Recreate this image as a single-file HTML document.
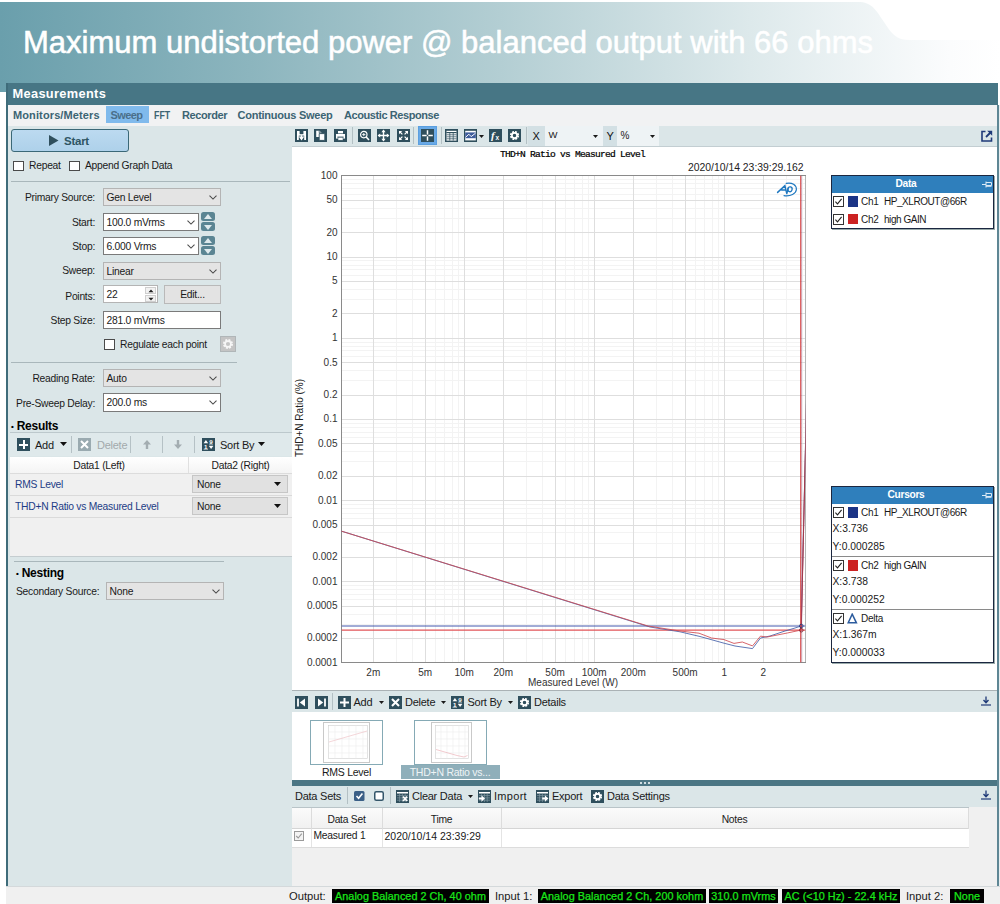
<!DOCTYPE html>
<html>
<head>
<meta charset="utf-8">
<title>Measurements</title>
<style>
*{box-sizing:border-box;margin:0;padding:0}
html,body{width:1000px;height:904px;overflow:hidden;background:#fff}
body{font-family:"Liberation Sans",sans-serif;font-size:10.3px;letter-spacing:-0.25px;color:#1a1a1a;position:relative}
.abs{position:absolute}
.t{position:absolute;white-space:nowrap;line-height:14px;height:14px}
#banner{left:0;top:0;width:1000px;height:92px}
#title{left:23px;top:23px;font-size:31px;letter-spacing:0.07px;-webkit-text-stroke:0.55px #fff;line-height:40px;height:40px;color:#fff;letter-spacing:0px}
#bar{left:6px;top:83px;width:992px;height:22px;background:#477685}
#bar .t{left:6.5px;top:4px;color:#fff;font-weight:bold;font-size:12.8px;letter-spacing:0.33px}
#tabs{left:8px;top:105px;width:989px;height:21px;background:#f1f2f3;z-index:2}
#tabs .t{top:3px;font-weight:bold;font-size:11px;color:#3c6473}
#lborder{left:6px;top:83px;width:2px;height:803px;background:#3f6c7a}
#left{left:8px;top:124px;width:284px;height:762px;background:#dbe6e8}
#right{left:292px;top:124px;width:705px;height:762px;background:#dbe6e8}
#rborder{left:997px;top:105px;width:1.5px;height:781px;background:#5e8694}
#rstrip{left:998.5px;top:105px;width:1.5px;height:799px;background:#e8eef0}
#status{left:6px;top:886px;width:994px;height:18px;background:#f0f0f0;border-top:1px solid #d4d9db}
/* left panel controls */
.lbl{position:absolute;white-space:nowrap;line-height:14px;height:14px;text-align:right}
.combo{position:absolute;height:18px;border:1px solid #b4b4b4;background:#e4e4e4;line-height:16px;padding-left:2.5px;white-space:nowrap}
.combo.w{background:#fff;border-color:#7a7a7a}
.combo svg{position:absolute;right:3.5px;top:6px}
.cb{position:absolute;width:10.5px;height:10.5px;border:1px solid #4a4a4a;background:#fff}
.hr{position:absolute;height:1px;background:#a9b7bb}
.spin{position:absolute;width:14px;height:9px;background:#5b8593;border-radius:2.5px}
.spin:after{content:"";position:absolute;left:2.5px;top:2px;border:4.5px solid transparent}
.spin.up:after{border-bottom:5px solid #dfeaed;border-top:0;top:2px}
.spin.dn:after{border-top:5px solid #dfeaed;border-bottom:0;top:2.5px}
#left .t,#left .lbl{line-height:16px}
#left .combo{line-height:18px}
.ico{position:absolute;width:13px;height:13px;background:#2f4f5d}
.g{position:absolute;background:#0f0;color:#000}
</style>
</head>
<body>
<!-- BANNER -->
<svg id="banner" class="abs" width="1000" height="92" viewBox="0 0 1000 92">
<defs>
<linearGradient id="bg1" x1="0" y1="0" x2="1" y2="0">
<stop offset="0" stop-color="#6a9fac"/>
<stop offset="0.25" stop-color="#8cb5be"/>
<stop offset="0.5" stop-color="#b3ced3"/>
<stop offset="0.75" stop-color="#dde9eb"/>
<stop offset="0.95" stop-color="#fbfcfd"/>
<stop offset="1" stop-color="#ffffff"/>
</linearGradient>
</defs>
<path d="M0,2 L858,2 C872,2 876,10 884,22 C892,34 896,40 910,40 L1000,40 L1000,84 L6,84 L6,92 L0,92 Z" fill="url(#bg1)"/>
</svg>
<div id="title" class="t">Maximum undistorted power @ balanced output with 66 ohms</div>
<div id="bar" class="abs"><div class="t">Measurements</div></div>
<div id="tabs" class="abs">
<div class="abs" style="left:98px;top:1px;width:42.6px;height:17.4px;background:#80baec"></div>
<div class="t" id="tb1" style="letter-spacing:0.115px;left:5px">Monitors/Meters</div>
<div class="t" id="tb2" style="letter-spacing:-0.59px;left:102.5px;color:#4a6f8a">Sweep</div>
<div class="t" id="tb3" style="letter-spacing:0;left:146px;transform:scaleX(0.8);transform-origin:left center">FFT</div>
<div class="t" id="tb4" style="letter-spacing:-0.41px;left:174px">Recorder</div>
<div class="t" id="tb5" style="letter-spacing:-0.25px;left:229.5px">Continuous Sweep</div>
<div class="t" id="tb6" style="letter-spacing:-0.42px;left:336px">Acoustic Response</div>
</div>
<div id="lborder" class="abs"></div>
<div id="left" class="abs">
<!-- coordinates relative to (8,124) -->
<div class="abs" style="left:3px;top:4.5px;width:117.5px;height:23px;border:1.4px solid #3b6877;border-radius:3px;background:linear-gradient(#bcdaf0,#aed1ea)"></div>
<svg class="abs" style="left:41px;top:10.5px" width="9.5" height="11" viewBox="0 0 9.5 11"><path d="M0,0 L9.5,5.5 L0,11 Z" fill="#2f4f5d"/></svg>
<div class="t" style="left:56px;top:9px;font-weight:bold;font-size:11.5px;color:#2f5563">Start</div>
<div class="cb" style="left:5px;top:36.5px"></div><div class="t" style="left:21px;top:34px">Repeat</div>
<div class="cb" style="left:61px;top:36.5px"></div><div class="t" style="left:77px;top:34px">Append Graph Data</div>
<div class="hr" style="left:3px;top:57px;width:279px"></div>

<div class="lbl" style="left:0;width:87px;top:66px">Primary Source:</div>
<div class="combo" style="left:95px;top:64px;width:118px">Gen Level<svg width="8" height="5" viewBox="0 0 8 5"><path d="M0.5,0.6 L4,4.1 L7.5,0.6" fill="none" stroke="#4a4a4a" stroke-width="1.05"/></svg></div>
<div class="lbl" style="left:0;width:87px;top:91px">Start:</div>
<div class="combo w" style="left:95px;top:89px;width:96px">100.0 mVrms<svg width="8" height="5" viewBox="0 0 8 5"><path d="M0.5,0.6 L4,4.1 L7.5,0.6" fill="none" stroke="#4a4a4a" stroke-width="1.05"/></svg></div>
<div class="spin up" style="left:193px;top:88px"></div><div class="spin dn" style="left:193px;top:98px"></div>
<div class="lbl" style="left:0;width:87px;top:115px">Stop:</div>
<div class="combo w" style="left:95px;top:113px;width:96px">6.000 Vrms<svg width="8" height="5" viewBox="0 0 8 5"><path d="M0.5,0.6 L4,4.1 L7.5,0.6" fill="none" stroke="#4a4a4a" stroke-width="1.05"/></svg></div>
<div class="spin up" style="left:193px;top:112px"></div><div class="spin dn" style="left:193px;top:122px"></div>
<div class="lbl" style="left:0;width:87px;top:139px">Sweep:</div>
<div class="combo" style="left:95px;top:138px;width:118px">Linear<svg width="8" height="5" viewBox="0 0 8 5"><path d="M0.5,0.6 L4,4.1 L7.5,0.6" fill="none" stroke="#4a4a4a" stroke-width="1.05"/></svg></div>
<div class="lbl" style="left:0;width:87px;top:165px">Points:</div>
<div class="combo w" style="left:95px;top:161px;width:55px;border-color:#b4b4b4">22</div>
<div class="abs" style="left:137px;top:162.5px;width:11px;height:7.5px;background:#f2f2f2;border:1px solid #cfcfcf"></div><div class="abs" style="left:137px;top:170.5px;width:11px;height:7.5px;background:#f2f2f2;border:1px solid #cfcfcf"></div>
<svg class="abs" style="left:139.5px;top:164.5px" width="6" height="12" viewBox="0 0 6 12"><path d="M0.5,3.2 L3,0.6 L5.5,3.2 Z M0.5,8.8 L3,11.4 L5.5,8.8 Z" fill="#222"/></svg>
<div class="abs" style="left:156px;top:161px;width:57px;height:19px;border:1px solid #b9b9b9;background:#e3e3e3;text-align:center;line-height:17px">Edit...</div>
<div class="lbl" style="left:0;width:87px;top:189px">Step Size:</div>
<div class="combo w" style="left:95px;top:187px;width:118px">281.0 mVrms</div>
<div class="cb" style="left:96px;top:215px"></div><div class="t" style="left:112px;top:213px">Regulate each point</div>
<div class="abs" style="left:212px;top:212px;width:16px;height:16px;background:#c4c4c4;border:1px solid #b0b6b8"></div>
<svg class="abs" style="left:214px;top:214px" width="12" height="12" viewBox="0 0 12 12"><circle cx="6" cy="6" r="3.9" fill="none" stroke="#f6f6f6" stroke-width="2.2" stroke-dasharray="1.9 1.16"/><circle cx="6" cy="6" r="2.9" fill="none" stroke="#f6f6f6" stroke-width="1.6"/></svg>
<div class="hr" style="left:3px;top:238px;width:226px"></div>

<div class="lbl" style="left:0;width:87px;top:247px">Reading Rate:</div>
<div class="combo" style="left:95px;top:245px;width:118px">Auto<svg width="8" height="5" viewBox="0 0 8 5"><path d="M0.5,0.6 L4,4.1 L7.5,0.6" fill="none" stroke="#4a4a4a" stroke-width="1.05"/></svg></div>
<div class="lbl" style="left:0;width:87px;top:272px">Pre-Sweep Delay:</div>
<div class="combo w" style="left:95px;top:269px;width:118px;height:19px">200.0 ms<svg width="8" height="5" viewBox="0 0 8 5"><path d="M0.5,0.6 L4,4.1 L7.5,0.6" fill="none" stroke="#4a4a4a" stroke-width="1.05"/></svg></div>
<div class="t" style="left:3px;top:294px;font-weight:bold;font-size:12px;color:#000"><span style="font-size:8px;vertical-align:1px">&#8226;</span> Results</div>

<!-- results toolbar -->
<div class="abs" style="left:2px;top:308px;width:282px;height:24px;background:#dfe9eb;border-top:1px solid #bcc8cc"></div>
<div class="ico" style="left:9px;top:314px"></div>
<div class="abs" style="left:14.5px;top:316px;width:2px;height:9px;background:#fff"></div><div class="abs" style="left:11px;top:319.5px;width:9px;height:2px;background:#fff"></div>
<div class="t" style="left:27px;top:312.5px;font-size:11px">Add</div>
<svg class="abs" style="left:52px;top:318px" width="7" height="4"><path d="M0,0 L7,0 L3.5,4 Z" fill="#111"/></svg>
<div class="abs" style="left:63px;top:312px;width:1px;height:17px;background:#b5c1c5"></div>
<div class="ico" style="left:70px;top:314px;background:#9aaab0"></div>
<svg class="abs" style="left:70px;top:314px" width="13" height="13"><path d="M3,3 L10,10 M10,3 L3,10" stroke="#fff" stroke-width="2"/></svg>
<div class="t" style="left:89px;top:312.5px;font-size:11px;color:#a3a9ab">Delete</div>
<div class="abs" style="left:122px;top:312px;width:1px;height:17px;background:#b5c1c5"></div>
<svg class="abs" style="left:135px;top:316px" width="8" height="9" viewBox="0 0 8 9"><path d="M4,0 L8,4.5 L5.2,4.5 L5.2,9 L2.8,9 L2.8,4.5 L0,4.5 Z" fill="#a3adb1"/></svg>
<div class="abs" style="left:154px;top:312px;width:1px;height:17px;background:#b5c1c5"></div>
<svg class="abs" style="left:166px;top:316px" width="8" height="9" viewBox="0 0 8 9"><path d="M4,9 L8,4.5 L5.2,4.5 L5.2,0 L2.8,0 L2.8,4.5 L0,4.5 Z" fill="#a3adb1"/></svg>
<div class="abs" style="left:186px;top:312px;width:1px;height:17px;background:#b5c1c5"></div>
<div class="ico" style="left:194px;top:314px"></div>
<svg class="abs" style="left:194px;top:314px" width="13" height="13" viewBox="0 0 13 13"><path d="M1.6,5.2 L3.9,2 L6.2,5.2 Z" fill="#fff"/><path d="M6.9,8 L11.3,8 L9.1,11 Z" fill="#fff"/><text x="2.1" y="10.6" font-family="Liberation Sans, sans-serif" font-size="6.2" font-weight="bold" fill="#fff" letter-spacing="0">1</text><text x="7.2" y="6.2" font-family="Liberation Sans, sans-serif" font-size="6.2" font-weight="bold" fill="#fff" letter-spacing="0">9</text><path d="M1.6,11.3 H6 M7,6.9 H11" stroke="#fff" stroke-width="0.6"/></svg>
<div class="t" style="left:212px;top:312.5px;font-size:11px">Sort By</div>
<svg class="abs" style="left:250px;top:318px" width="7" height="4"><path d="M0,0 L7,0 L3.5,4 Z" fill="#111"/></svg>

<!-- table -->
<div class="abs" style="left:2px;top:333px;width:282px;height:100px;background:#f0f0f0"></div>
<div class="abs" style="left:2px;top:333px;width:282px;height:17px;background:linear-gradient(#ffffff,#f4f4f4);border-bottom:1px solid #dcdcdc"></div>
<div class="abs" style="left:180px;top:333px;width:1px;height:16px;background:#e0e0e0"></div>
<div class="t" style="left:2px;width:178px;text-align:center;top:334px">Data1 (Left)</div>
<div class="t" style="left:181px;width:103px;text-align:center;top:334px">Data2 (Right)</div>
<div class="t" style="left:7px;top:353px;color:#1c3c86">RMS Level</div>
<div class="abs" style="left:184px;top:351px;width:96px;height:18px;background:#e1e1e1;border:1px solid #c6c6c6;line-height:17.5px;padding-left:4px">None<svg width="7" height="4" viewBox="0 0 7 4" style="position:absolute;right:6px;top:6px"><path d="M0,0 L7,0 L3.5,4 Z" fill="#111"/></svg></div>
<div class="abs" style="left:2px;top:371px;width:282px;height:1px;background:#dadada"></div>
<div class="t" style="left:7px;top:375px;color:#1c3c86">THD+N Ratio vs Measured Level</div>
<div class="abs" style="left:184px;top:373px;width:96px;height:18px;background:#e1e1e1;border:1px solid #c6c6c6;line-height:17.5px;padding-left:4px">None<svg width="7" height="4" viewBox="0 0 7 4" style="position:absolute;right:6px;top:6px"><path d="M0,0 L7,0 L3.5,4 Z" fill="#111"/></svg></div>
<div class="abs" style="left:2px;top:393px;width:282px;height:1px;background:#dadada"></div>
<div class="abs" style="left:2px;top:432px;width:282px;height:1px;background:#c5cdd0"></div>

<div class="hr" style="left:6px;top:437px;width:210px"></div>
<div class="t" style="left:8px;top:441px;font-weight:bold;font-size:12px;color:#000"><span style="font-size:8px;vertical-align:1px">&#8226;</span> Nesting</div>
<div class="t" style="left:8px;top:460px">Secondary Source:</div>
<div class="combo" style="left:98px;top:458px;width:118px">None<svg width="8" height="5" viewBox="0 0 8 5"><path d="M0.5,0.6 L4,4.1 L7.5,0.6" fill="none" stroke="#4a4a4a" stroke-width="1.05"/></svg></div>
</div>
<!--RIGHT-START-->
<div id="right" class="abs"></div><div id="rborder" class="abs"></div><div id="rstrip" class="abs"></div>
<svg class="abs" style="left:294.5px;top:129px" width="13" height="13" viewBox="0 0 13 13"><rect width="13" height="13" fill="#2f4f5d"/><path d="M2,2 H11 V11 H2 Z" fill="#fff"/><rect x="4.6" y="2" width="3.8" height="3.2" fill="#2f4f5d"/><rect x="3.8" y="6.6" width="5.4" height="4.4" fill="#2f4f5d"/><path d="M6.5,6.2 V9 M4.9,8.2 L6.5,10.4 L8.1,8.2 Z" stroke="#fff" stroke-width="1.2" fill="#fff"/></svg>
<svg class="abs" style="left:314px;top:129px" width="13" height="13" viewBox="0 0 13 13"><rect width="13" height="13" fill="#2f4f5d"/><path d="M2.2,1.8 H5.5 L7.2,3.5 V8 H2.2 Z" fill="#fff"/><path d="M5.2,4.6 H10.8 V11.4 H5.2 Z" fill="#fff" stroke="#2f4f5d" stroke-width="0.9"/><path d="M5.2,1.6 V3.8 H7.4" stroke="#2f4f5d" stroke-width="0.8" fill="none"/></svg>
<svg class="abs" style="left:334px;top:129px" width="13" height="13" viewBox="0 0 13 13"><rect width="13" height="13" fill="#2f4f5d"/><rect x="4" y="2" width="5" height="2.4" fill="#fff"/><rect x="2" y="5" width="9" height="4.6" fill="#fff"/><rect x="3.4" y="7.6" width="6.2" height="0.9" fill="#2f4f5d"/><rect x="4" y="8.5" width="5" height="2.7" fill="#fff" stroke="#2f4f5d" stroke-width="0.5"/></svg>
<div class="abs" style="left:352px;top:127px;width:1px;height:17px;background:#b3c0c4"></div>
<svg class="abs" style="left:358px;top:129px" width="13" height="13" viewBox="0 0 13 13"><rect width="13" height="13" fill="#2f4f5d"/><circle cx="5.8" cy="5.6" r="3.2" stroke="#fff" fill="none" stroke-width="1.2"/><path d="M8.2,8 L11,11" stroke="#fff" stroke-width="1.6"/><path d="M4.2,5.6 H7.4 M5.8,4 V7.2" stroke="#fff" stroke-width="0.9"/></svg>
<svg class="abs" style="left:377px;top:129px" width="13" height="13" viewBox="0 0 13 13"><rect width="13" height="13" fill="#2f4f5d"/><path d="M6.5,1.5 V11.5 M1.5,6.5 H11.5" stroke="#fff" stroke-width="1.4"/><path d="M6.5,0.6 L8.6,3.2 H4.4 Z M6.5,12.4 L8.6,9.8 H4.4 Z M0.6,6.5 L3.2,4.4 V8.6 Z M12.4,6.5 L9.8,4.4 V8.6 Z" fill="#fff"/></svg>
<svg class="abs" style="left:396.5px;top:129px" width="13" height="13" viewBox="0 0 13 13"><rect width="13" height="13" fill="#2f4f5d"/><path d="M2,2 L5.2,2 L2,5.2 Z M11,2 L7.8,2 L11,5.2 Z M2,11 L5.2,11 L2,7.8 Z M11,11 L7.8,11 L11,7.8 Z" fill="#fff"/><path d="M3,3 L5.4,5.4 M10,3 L7.6,5.4 M3,10 L5.4,7.6 M10,10 L7.6,7.6" stroke="#fff" stroke-width="1.2"/></svg>
<div class="abs" style="left:413px;top:127px;width:1px;height:17px;background:#b3c0c4"></div>
<div class="abs" style="left:418px;top:126px;width:19px;height:19px;background:#69a9e6;border:1px solid #5b9fe0"></div>
<svg class="abs" style="left:421px;top:129px" width="13" height="13" viewBox="0 0 13 13"><rect width="13" height="13" fill="#2f4f5d"/><path d="M6.5,1.2 V5 M6.5,8 V11.8 M1.2,6.5 H5 M8,6.5 H11.8" stroke="#fff" stroke-width="1.5"/><circle cx="6.5" cy="6.5" r="1" fill="none" stroke="#fff" stroke-width="0.7"/></svg>
<div class="abs" style="left:441px;top:127px;width:1px;height:17px;background:#b3c0c4"></div>
<svg class="abs" style="left:445px;top:129px" width="13" height="13" viewBox="0 0 13 13"><rect width="13" height="13" fill="#2f4f5d"/><rect x="1.5" y="1.8" width="10" height="9.8" fill="#fff"/><path d="M1.5,3.6 H11.5 M1.5,5.8 H11.5 M1.5,7.8 H11.5 M1.5,9.8 H11.5 M4.8,3.6 V11.6 M8.2,3.6 V11.6" stroke="#2f4f5d" stroke-width="0.75"/><rect x="1.5" y="3" width="10" height="1.1" fill="#2f4f5d"/></svg>
<svg class="abs" style="left:464px;top:129px" width="13" height="13" viewBox="0 0 13 13"><rect width="13" height="13" fill="#2f4f5d"/><rect x="1.2" y="1.8" width="10.6" height="9.6" fill="#fff"/><rect x="1.2" y="3.4" width="10.6" height="5.8" fill="#3f5d9c"/><path d="M1.5,8.4 L4.8,5.2 L7.2,7.6 L11.5,4.2" stroke="#fff" stroke-width="1" fill="none"/></svg>
<svg class="abs" style="left:479px;top:134.5px" width="5" height="3" viewBox="0 0 5 3"><path d="M0,0 L5,0 L2.5,3 Z" fill="#1a1a1a"/></svg>
<svg class="abs" style="left:489px;top:129px" width="13" height="13" viewBox="0 0 13 13"><rect width="13" height="13" fill="#2f4f5d"/><text x="2" y="10" font-family="Liberation Serif, serif" font-style="italic" font-size="11" font-weight="bold" fill="#fff">f</text><text x="6.6" y="11" font-family="Liberation Sans, sans-serif" font-size="6.5" fill="#fff" font-weight="bold">x</text></svg>
<svg class="abs" style="left:508px;top:129px" width="13" height="13" viewBox="0 0 13 13"><rect width="13" height="13" fill="#2f4f5d"/><circle cx="6.5" cy="6.5" r="3.3" stroke="#fff" stroke-width="2.6" fill="none" stroke-dasharray="1.7 0.9"/><circle cx="6.5" cy="6.5" r="2.6" stroke="#fff" stroke-width="1.6" fill="none"/></svg>
<div class="abs" style="left:526px;top:127px;width:1px;height:17px;background:#b3c0c4"></div>
<div class="abs" style="left:528px;top:126px;width:17px;height:20px;background:#d3e0e4"></div>
<div class="t" style="left:532.5px;top:128.5px;font-size:11px;color:#111">X</div>
<div class="abs" style="left:545px;top:126px;width:58px;height:20px;background:#eef3f5"></div>
<div class="t" style="left:548.5px;top:127.5px;font-size:9.5px">W</div>
<svg class="abs" style="left:593px;top:135px" width="5" height="3" viewBox="0 0 5 3"><path d="M0,0 L5,0 L2.5,3 Z" fill="#1a1a1a"/></svg>
<div class="abs" style="left:603px;top:126px;width:14px;height:20px;background:#d3e0e4"></div>
<div class="t" style="left:606.5px;top:128.5px;font-size:11px;color:#111">Y</div>
<div class="abs" style="left:617px;top:126px;width:42px;height:20px;background:#eef3f5"></div>
<div class="t" style="left:620.5px;top:128.5px;font-size:10px">%</div>
<svg class="abs" style="left:650px;top:135px" width="5" height="3" viewBox="0 0 5 3"><path d="M0,0 L5,0 L2.5,3 Z" fill="#1a1a1a"/></svg>
<svg class="abs" style="left:981px;top:130px" width="12" height="12" viewBox="0 0 12 12"><path d="M4.5,1.5 H1 V11 H10.5 V7.5" stroke="#1f3a78" stroke-width="1.6" fill="none"/><path d="M5,7 L10,2" stroke="#1f3a78" stroke-width="1.8"/><path d="M6.2,0.8 H11.2 V5.8 Z" fill="#1f3a78"/></svg>
<div class="abs" style="left:292px;top:146px;width:705px;height:1px;background:#c3ced2"></div>
<svg class="abs" style="left:292px;top:147px" width="705" height="543" viewBox="0 0 705 543" font-family="Liberation Sans, sans-serif" letter-spacing="0">
<rect x="0" y="0" width="705" height="543" fill="#fff"/>
<g stroke="#f3f3f3" stroke-width="1" shape-rendering="crispEdges">
<line x1="104.5" y1="28.5" x2="104.5" y2="515.5"/>
<line x1="120.5" y1="28.5" x2="120.5" y2="515.5"/>
<line x1="143.5" y1="28.5" x2="143.5" y2="515.5"/>
<line x1="152.5" y1="28.5" x2="152.5" y2="515.5"/>
<line x1="160.5" y1="28.5" x2="160.5" y2="515.5"/>
<line x1="166.5" y1="28.5" x2="166.5" y2="515.5"/>
<line x1="234.5" y1="28.5" x2="234.5" y2="515.5"/>
<line x1="250.5" y1="28.5" x2="250.5" y2="515.5"/>
<line x1="273.5" y1="28.5" x2="273.5" y2="515.5"/>
<line x1="282.5" y1="28.5" x2="282.5" y2="515.5"/>
<line x1="290.5" y1="28.5" x2="290.5" y2="515.5"/>
<line x1="296.5" y1="28.5" x2="296.5" y2="515.5"/>
<line x1="364.5" y1="28.5" x2="364.5" y2="515.5"/>
<line x1="380.5" y1="28.5" x2="380.5" y2="515.5"/>
<line x1="403.5" y1="28.5" x2="403.5" y2="515.5"/>
<line x1="412.5" y1="28.5" x2="412.5" y2="515.5"/>
<line x1="420.5" y1="28.5" x2="420.5" y2="515.5"/>
<line x1="426.5" y1="28.5" x2="426.5" y2="515.5"/>
<line x1="494.5" y1="28.5" x2="494.5" y2="515.5"/>
<line x1="510.5" y1="28.5" x2="510.5" y2="515.5"/>
<line x1="49.5" y1="477.5" x2="513.5" y2="477.5"/>
<line x1="49.5" y1="467.5" x2="513.5" y2="467.5"/>
<line x1="49.5" y1="452.5" x2="513.5" y2="452.5"/>
<line x1="49.5" y1="447.5" x2="513.5" y2="447.5"/>
<line x1="49.5" y1="442.5" x2="513.5" y2="442.5"/>
<line x1="49.5" y1="438.5" x2="513.5" y2="438.5"/>
<line x1="49.5" y1="396.5" x2="513.5" y2="396.5"/>
<line x1="49.5" y1="385.5" x2="513.5" y2="385.5"/>
<line x1="49.5" y1="371.5" x2="513.5" y2="371.5"/>
<line x1="49.5" y1="366.5" x2="513.5" y2="366.5"/>
<line x1="49.5" y1="361.5" x2="513.5" y2="361.5"/>
<line x1="49.5" y1="357.5" x2="513.5" y2="357.5"/>
<line x1="49.5" y1="314.5" x2="513.5" y2="314.5"/>
<line x1="49.5" y1="304.5" x2="513.5" y2="304.5"/>
<line x1="49.5" y1="290.5" x2="513.5" y2="290.5"/>
<line x1="49.5" y1="285.5" x2="513.5" y2="285.5"/>
<line x1="49.5" y1="280.5" x2="513.5" y2="280.5"/>
<line x1="49.5" y1="276.5" x2="513.5" y2="276.5"/>
<line x1="49.5" y1="233.5" x2="513.5" y2="233.5"/>
<line x1="49.5" y1="223.5" x2="513.5" y2="223.5"/>
<line x1="49.5" y1="209.5" x2="513.5" y2="209.5"/>
<line x1="49.5" y1="203.5" x2="513.5" y2="203.5"/>
<line x1="49.5" y1="199.5" x2="513.5" y2="199.5"/>
<line x1="49.5" y1="195.5" x2="513.5" y2="195.5"/>
<line x1="49.5" y1="152.5" x2="513.5" y2="152.5"/>
<line x1="49.5" y1="142.5" x2="513.5" y2="142.5"/>
<line x1="49.5" y1="128.5" x2="513.5" y2="128.5"/>
<line x1="49.5" y1="122.5" x2="513.5" y2="122.5"/>
<line x1="49.5" y1="118.5" x2="513.5" y2="118.5"/>
<line x1="49.5" y1="113.5" x2="513.5" y2="113.5"/>
<line x1="49.5" y1="71.5" x2="513.5" y2="71.5"/>
<line x1="49.5" y1="61.5" x2="513.5" y2="61.5"/>
<line x1="49.5" y1="47.5" x2="513.5" y2="47.5"/>
<line x1="49.5" y1="41.5" x2="513.5" y2="41.5"/>
<line x1="49.5" y1="36.5" x2="513.5" y2="36.5"/>
<line x1="49.5" y1="32.5" x2="513.5" y2="32.5"/>
</g>
<g stroke="#dedede" stroke-width="1" shape-rendering="crispEdges">
<line x1="81.5" y1="28.5" x2="81.5" y2="515.5"/>
<line x1="133.5" y1="28.5" x2="133.5" y2="515.5"/>
<line x1="172.5" y1="28.5" x2="172.5" y2="515.5"/>
<line x1="211.5" y1="28.5" x2="211.5" y2="515.5"/>
<line x1="263.5" y1="28.5" x2="263.5" y2="515.5"/>
<line x1="302.5" y1="28.5" x2="302.5" y2="515.5"/>
<line x1="341.5" y1="28.5" x2="341.5" y2="515.5"/>
<line x1="393.5" y1="28.5" x2="393.5" y2="515.5"/>
<line x1="432.5" y1="28.5" x2="432.5" y2="515.5"/>
<line x1="471.5" y1="28.5" x2="471.5" y2="515.5"/>
<line x1="49.5" y1="491.5" x2="513.5" y2="491.5"/>
<line x1="49.5" y1="459.5" x2="513.5" y2="459.5"/>
<line x1="49.5" y1="434.5" x2="513.5" y2="434.5"/>
<line x1="49.5" y1="410.5" x2="513.5" y2="410.5"/>
<line x1="49.5" y1="378.5" x2="513.5" y2="378.5"/>
<line x1="49.5" y1="353.5" x2="513.5" y2="353.5"/>
<line x1="49.5" y1="329.5" x2="513.5" y2="329.5"/>
<line x1="49.5" y1="296.5" x2="513.5" y2="296.5"/>
<line x1="49.5" y1="272.5" x2="513.5" y2="272.5"/>
<line x1="49.5" y1="248.5" x2="513.5" y2="248.5"/>
<line x1="49.5" y1="215.5" x2="513.5" y2="215.5"/>
<line x1="49.5" y1="191.5" x2="513.5" y2="191.5"/>
<line x1="49.5" y1="166.5" x2="513.5" y2="166.5"/>
<line x1="49.5" y1="134.5" x2="513.5" y2="134.5"/>
<line x1="49.5" y1="110.5" x2="513.5" y2="110.5"/>
<line x1="49.5" y1="85.5" x2="513.5" y2="85.5"/>
<line x1="49.5" y1="53.5" x2="513.5" y2="53.5"/>
</g>
<path d="M513.5,28.5 V515.5" fill="none" stroke="#b4b4b4" stroke-width="1" shape-rendering="crispEdges"/><path d="M513.5,28.5 H49.5 V515.5 H513.5" fill="none" stroke="#8a8a8a" stroke-width="1" shape-rendering="crispEdges"/>
<g font-size="10" fill="#333" text-anchor="end">
<text x="45.5" y="31.8">100</text>
<text x="45.5" y="56.2">50</text>
<text x="45.5" y="88.5">20</text>
<text x="45.5" y="113.0">10</text>
<text x="45.5" y="137.4">5</text>
<text x="45.5" y="169.7">2</text>
<text x="45.5" y="194.1">1</text>
<text x="45.5" y="218.6">0.5</text>
<text x="45.5" y="250.9">0.2</text>
<text x="45.5" y="275.3">0.1</text>
<text x="45.5" y="299.7">0.05</text>
<text x="45.5" y="332.0">0.02</text>
<text x="45.5" y="356.5">0.01</text>
<text x="45.5" y="380.9">0.005</text>
<text x="45.5" y="413.2">0.002</text>
<text x="45.5" y="437.6">0.001</text>
<text x="45.5" y="462.1">0.0005</text>
<text x="45.5" y="494.4">0.0002</text>
<text x="45.5" y="518.8">0.0001</text>
</g>
<g font-size="10" fill="#333" text-anchor="middle">
<text x="81.3" y="528.7">2m</text>
<text x="133.1" y="528.7">5m</text>
<text x="172.2" y="528.7">10m</text>
<text x="211.3" y="528.7">20m</text>
<text x="263.1" y="528.7">50m</text>
<text x="302.2" y="528.7">100m</text>
<text x="341.3" y="528.7">200m</text>
<text x="393.1" y="528.7">500m</text>
<text x="432.2" y="528.7">1</text>
<text x="471.3" y="528.7">2</text>
<text x="281" y="539.0" font-size="10">Measured Level (W)</text>
</g>
<text transform="translate(11.300000000000011,271) rotate(-90)" font-size="10" fill="#222" text-anchor="middle">THD+N Ratio (%)</text>
<text x="208" y="9.5" font-family="Liberation Mono, monospace" font-size="9.6" letter-spacing="-0.76" fill="#000" stroke="#000" stroke-width="0.22">THD+N Ratio vs Measured Level</text>
<text x="511.5" y="24" font-size="10.4" fill="#222" text-anchor="end">2020/10/14 23:39:29.162</text>
<clipPath id="pc"><rect x="49.5" y="28.5" width="464.0" height="487.0"/></clipPath>
<g clip-path="url(#pc)" fill="none" stroke-linejoin="round">
<line x1="49.5" y1="479" x2="513.5" y2="479" stroke="#4558ad" stroke-width="1"/>
<line x1="49.5" y1="483.20000000000005" x2="513.5" y2="483.20000000000005" stroke="#e25558" stroke-width="1.3"/>
<polyline points="49.0,384.0 358.0,480.0 388.0,484.8 408.0,489.5 432.0,496.2 443.0,499.0 460.5,501.6 468.5,491.0 478.0,489.0 493.0,484.0 503.0,481.0 509.2,479.0 513.5,299.0 518.0,93.0" stroke="#4560a8" stroke-width="0.85"/>
<polyline points="49.0,384.0 356.0,479.0 388.0,484.0 407.0,486.2 419.5,491.0 432.0,492.6 442.0,496.4 450.3,495.0 460.5,498.9 468.5,489.1 474.8,490.1 495.8,485.9 509.2,483.0 513.5,303.0 518.0,93.0" stroke="#d04a50" stroke-width="0.85"/>
<polyline points="509.3,481.0 513.5,299.0 518.0,93.0" stroke="#9a3446" stroke-width="0.8"/>
<line x1="509.6" y1="28.5" x2="509.6" y2="515.5" stroke="#6a5a98" stroke-width="0.3"/>
<line x1="508.75" y1="28.5" x2="508.75" y2="515.5" stroke="#d43838" stroke-width="1.05"/>
<circle cx="509.29999999999995" cy="479" r="1.8" stroke="#1c2f7a" stroke-width="0.8"/>
<circle cx="509.29999999999995" cy="483.20000000000005" r="1.8" stroke="#7a1c2a" stroke-width="0.8"/>
</g>
<g transform="translate(478,23)" fill="none" stroke="#1f78c0" stroke-linecap="round"><path d="M7.6,22.4 L14.9,15.6 L16.6,22.8 M11.6,19.9 H16" stroke-width="1.45"/><path d="M18.3,17.6 L16.8,23.6" stroke-width="1.4"/><ellipse cx="20" cy="19.3" rx="2.1" ry="2.4" stroke-width="1.3" transform="rotate(15 20 19.3)"/><path d="M16.2,13.4 C22,12.2 26.6,15 26.4,19.6 C26.2,23.6 20.5,26.6 14,25.6" stroke-width="1.15"/></g>
</svg>
<div class="abs" style="left:831px;top:175px;width:163px;height:54px;background:#fff;border:1px solid #1b2740;box-shadow:1px 1px 0 #9aa"></div>
<div class="abs" style="left:832px;top:176px;width:161px;height:17px;background:#2f7fbc"></div>
<div class="t" style="left:832px;top:177px;width:148px;text-align:center;color:#fff;font-weight:bold;font-size:10.2px;letter-spacing:-0.3px">Data</div>
<svg class="abs" style="left:982px;top:181px" width="10" height="7" viewBox="0 0 10 7"><path d="M0,3.5 H4 M4,0.5 V6.5 M4,1.5 H9.5 V4.5 H4 M4,5.3 H9.5" stroke="#dbe9f5" stroke-width="1" fill="none"/></svg>
<svg class="abs" style="left:833px;top:196.0px" width="11" height="11" viewBox="0 0 11 11"><rect x="0.5" y="0.5" width="10" height="10" fill="#fff" stroke="#333" stroke-width="1"/><path d="M2.4,5.6 L4.5,7.8 L8.6,2.8" stroke="#222" stroke-width="1.1" fill="none"/></svg>
<div class="abs" style="left:848px;top:196.0px;width:10px;height:10.5px;background:#1b3486"></div>
<div class="t" style="left:861px;top:195.0px;font-size:10px">Ch1</div>
<div class="t" style="left:884px;top:195.0px;font-size:10px;letter-spacing:-0.45px">HP_XLROUT@66R</div>
<svg class="abs" style="left:833px;top:213.5px" width="11" height="11" viewBox="0 0 11 11"><rect x="0.5" y="0.5" width="10" height="10" fill="#fff" stroke="#333" stroke-width="1"/><path d="M2.4,5.6 L4.5,7.8 L8.6,2.8" stroke="#222" stroke-width="1.1" fill="none"/></svg>
<div class="abs" style="left:848px;top:213.5px;width:10px;height:10.5px;background:#cc2222"></div>
<div class="t" style="left:861px;top:212.5px;font-size:10px">Ch2</div>
<div class="t" style="left:884px;top:212.5px;font-size:10px;letter-spacing:-0.45px">high GAIN</div>
<div class="abs" style="left:831px;top:486px;width:163px;height:177px;background:#fff;border:1px solid #1b2740;box-shadow:1px 1px 0 #9aa"></div>
<div class="abs" style="left:832px;top:487px;width:161px;height:17px;background:#2f7fbc"></div>
<div class="t" style="left:832px;top:487.5px;width:148px;text-align:center;color:#fff;font-weight:bold;font-size:10.2px;letter-spacing:-0.3px">Cursors</div>
<svg class="abs" style="left:982px;top:492px" width="10" height="7" viewBox="0 0 10 7"><path d="M0,3.5 H4 M4,0.5 V6.5 M4,1.5 H9.5 V4.5 H4 M4,5.3 H9.5" stroke="#dbe9f5" stroke-width="1" fill="none"/></svg>
<svg class="abs" style="left:833px;top:507px" width="11" height="11" viewBox="0 0 11 11"><rect x="0.5" y="0.5" width="10" height="10" fill="#fff" stroke="#333" stroke-width="1"/><path d="M2.4,5.6 L4.5,7.8 L8.6,2.8" stroke="#222" stroke-width="1.1" fill="none"/></svg>
<div class="abs" style="left:848px;top:507px;width:10px;height:10.5px;background:#1b3486"></div>
<div class="t" style="left:861px;top:506px;font-size:10px">Ch1</div>
<div class="t" style="left:884px;top:506px;font-size:10px;letter-spacing:-0.45px">HP_XLROUT@66R</div>
<div class="t" style="left:832.5px;top:522px;letter-spacing:0">X:3.736</div>
<div class="t" style="left:832.5px;top:539.5px;letter-spacing:0">Y:0.000285</div>
<svg class="abs" style="left:833px;top:560px" width="11" height="11" viewBox="0 0 11 11"><rect x="0.5" y="0.5" width="10" height="10" fill="#fff" stroke="#333" stroke-width="1"/><path d="M2.4,5.6 L4.5,7.8 L8.6,2.8" stroke="#222" stroke-width="1.1" fill="none"/></svg>
<div class="abs" style="left:848px;top:560px;width:10px;height:10.5px;background:#cc2222"></div>
<div class="t" style="left:861px;top:559px;font-size:10px">Ch2</div>
<div class="t" style="left:884px;top:559px;font-size:10px;letter-spacing:-0.45px">high GAIN</div>
<div class="t" style="left:832.5px;top:575px;letter-spacing:0">X:3.738</div>
<div class="t" style="left:832.5px;top:592.5px;letter-spacing:0">Y:0.000252</div>
<svg class="abs" style="left:833px;top:613px" width="11" height="11" viewBox="0 0 11 11"><rect x="0.5" y="0.5" width="10" height="10" fill="#fff" stroke="#333" stroke-width="1"/><path d="M2.4,5.6 L4.5,7.8 L8.6,2.8" stroke="#222" stroke-width="1.1" fill="none"/></svg>
<svg class="abs" style="left:847px;top:613px" width="11" height="11" viewBox="0 0 11 11"><path d="M5.2,1.2 L9.4,9.8 H1.2 Z" fill="none" stroke="#2c5c9e" stroke-width="1.5"/></svg>
<div class="t" style="left:861px;top:612px;font-size:10px">Delta</div>
<div class="t" style="left:832.5px;top:628px;letter-spacing:0">X:1.367m</div>
<div class="t" style="left:832.5px;top:645.5px;letter-spacing:0">Y:0.000033</div>
<div class="abs" style="left:832px;top:556px;width:161px;height:1px;background:#8a8a8a"></div>
<div class="abs" style="left:832px;top:609px;width:161px;height:1px;background:#8a8a8a"></div>
<div class="abs" style="left:292px;top:690px;width:705px;height:1px;background:#aab2b5"></div>
<svg class="abs" style="left:295px;top:695.5px" width="13" height="13" viewBox="0 0 13 13"><rect width="13" height="13" fill="#2f4f5d"/><path d="M3,2.5 V10.5" stroke="#fff" stroke-width="1.8"/><path d="M10,2.5 V10.5 L4.8,6.5 Z" fill="#fff"/></svg>
<svg class="abs" style="left:314.5px;top:695.5px" width="13" height="13" viewBox="0 0 13 13"><rect width="13" height="13" fill="#2f4f5d"/><path d="M10,2.5 V10.5" stroke="#fff" stroke-width="1.8"/><path d="M3,2.5 V10.5 L8.2,6.5 Z" fill="#fff"/></svg>
<div class="abs" style="left:332px;top:693px;width:1px;height:17px;background:#b3c0c4"></div>
<svg class="abs" style="left:337.5px;top:695.5px" width="13" height="13" viewBox="0 0 13 13"><rect width="13" height="13" fill="#2f4f5d"/><path d="M6.5,2 V11 M2,6.5 H11" stroke="#fff" stroke-width="2"/></svg>
<div class="t" style="left:353.5px;top:695px;font-size:11px">Add</div>
<svg class="abs" style="left:379px;top:701px" width="5" height="3" viewBox="0 0 5 3"><path d="M0,0 L5,0 L2.5,3 Z" fill="#1a1a1a"/></svg>
<svg class="abs" style="left:388.5px;top:695.5px" width="13" height="13" viewBox="0 0 13 13"><rect width="13" height="13" fill="#2f4f5d"/><path d="M3,3 L10,10 M10,3 L3,10" stroke="#fff" stroke-width="2.1"/></svg>
<div class="t" style="left:405px;top:695px;font-size:11px">Delete</div>
<svg class="abs" style="left:441px;top:701px" width="5" height="3" viewBox="0 0 5 3"><path d="M0,0 L5,0 L2.5,3 Z" fill="#1a1a1a"/></svg>
<svg class="abs" style="left:451px;top:695.5px" width="13" height="13" viewBox="0 0 13 13"><rect width="13" height="13" fill="#2f4f5d"/><path d="M1.6,5.2 L3.9,2 L6.2,5.2 Z" fill="#fff"/><path d="M6.9,8 L11.3,8 L9.1,11 Z" fill="#fff"/><text x="2.1" y="10.6" font-family="Liberation Sans, sans-serif" font-size="6.2" font-weight="bold" fill="#fff" letter-spacing="0">1</text><text x="7.2" y="6.2" font-family="Liberation Sans, sans-serif" font-size="6.2" font-weight="bold" fill="#fff" letter-spacing="0">9</text><path d="M1.6,11.3 H6 M7,6.9 H11" stroke="#fff" stroke-width="0.6"/></svg>
<div class="t" style="left:467.5px;top:695px;font-size:11px">Sort By</div>
<svg class="abs" style="left:508px;top:701px" width="5" height="3" viewBox="0 0 5 3"><path d="M0,0 L5,0 L2.5,3 Z" fill="#1a1a1a"/></svg>
<svg class="abs" style="left:517.5px;top:695.5px" width="13" height="13" viewBox="0 0 13 13"><rect width="13" height="13" fill="#2f4f5d"/><circle cx="6.5" cy="6.5" r="3.3" stroke="#fff" stroke-width="2.6" fill="none" stroke-dasharray="1.7 0.9"/><circle cx="6.5" cy="6.5" r="2.6" stroke="#fff" stroke-width="1.6" fill="none"/></svg>
<div class="t" style="left:534px;top:695px;font-size:11px">Details</div>
<svg class="abs" style="left:981px;top:696px" width="10" height="10" viewBox="0 0 10 10"><path d="M5,0.5 V6 M2.5,4 L5,6.8 L7.5,4" stroke="#1f3a78" stroke-width="1.3" fill="none"/><path d="M0,9 H10" stroke="#1f3a78" stroke-width="1.2"/></svg>
<div class="abs" style="left:292px;top:712px;width:705px;height:68px;background:#fff"></div>
<div class="abs" style="left:310px;top:720px;width:73px;height:45px;border:1px solid #85aab5;background:#fff"></div>
<svg class="abs" style="left:323px;top:722px" width="47" height="41" viewBox="0 0 47 41"><rect x="0.5" y="0.5" width="46" height="40" fill="#fff" stroke="#c9c9c9"/><rect x="5.5" y="3.5" width="39" height="33" fill="none" stroke="#cfcfcf" stroke-width="0.6"/><path d="M12,3.5 V36.5 M19,3.5 V36.5 M26,3.5 V36.5 M33,3.5 V36.5 M40,3.5 V36.5 M5.5,10 H44.5 M5.5,17 H44.5 M5.5,24 H44.5 M5.5,31 H44.5" stroke="#ececec" stroke-width="0.6"/><path d="M6,20 L44,9" stroke="#efc4c8" stroke-width="0.7" fill="none"/></svg>
<div class="t" style="left:310px;top:764.5px;width:73px;text-align:center;font-size:10.5px">RMS Level</div>
<div class="abs" style="left:414px;top:720px;width:73px;height:45px;border:1px solid #85aab5;background:#fff"></div>
<svg class="abs" style="left:431px;top:722px" width="41" height="41" viewBox="0 0 41 41"><rect x="0.5" y="0.5" width="40" height="40" fill="#fff" stroke="#c9c9c9"/><rect x="4.5" y="3.5" width="33" height="33" fill="none" stroke="#cfcfcf" stroke-width="0.6"/><path d="M10,3.5 V36.5 M16,3.5 V36.5 M22,3.5 V36.5 M28,3.5 V36.5 M34,3.5 V36.5 M4.5,10 H37.5 M4.5,17 H37.5 M4.5,24 H37.5 M4.5,31 H37.5" stroke="#ececec" stroke-width="0.6"/><path d="M5,27.5 L26,33.5 L33,35 L36.5,33.5" stroke="#ecb4ba" stroke-width="0.7" fill="none"/></svg>
<div class="abs" style="left:400.5px;top:764.5px;width:99.5px;height:14px;background:#8fafba"></div>
<div class="t" style="left:400px;top:765px;width:100px;text-align:center;color:#eef4f6;font-size:10.5px">THD+N Ratio vs...</div>
<div class="abs" style="left:292px;top:780px;width:705px;height:6px;background:#4b7684"></div>
<div class="abs" style="left:640px;top:782px;width:2px;height:2px;background:#cfdde1;box-shadow:4px 0 0 #cfdde1,8px 0 0 #cfdde1"></div>
<div class="t" style="left:295px;top:789px;font-size:11px">Data Sets</div>
<div class="abs" style="left:347px;top:787px;width:1px;height:17px;background:#b3c0c4"></div>
<svg class="abs" style="left:354px;top:791px" width="11" height="10" viewBox="0 0 11 10"><rect x="0" y="0" width="10.5" height="10" rx="1.5" fill="#3a5f86"/><path d="M2.5,5 L4.6,7.2 L8.4,2.6" stroke="#fff" stroke-width="1.6" fill="none"/></svg>
<svg class="abs" style="left:374px;top:791px" width="10" height="10" viewBox="0 0 10 10"><rect x="0.75" y="0.75" width="8.5" height="8.5" rx="1.5" fill="#fff" stroke="#34566a" stroke-width="1.5"/></svg>
<div class="abs" style="left:390px;top:787px;width:1px;height:17px;background:#b3c0c4"></div>
<svg class="abs" style="left:395.8px;top:789.5px" width="13" height="13" viewBox="0 0 13 13"><rect width="13" height="13" fill="#2f4f5d"/><rect x="1" y="2" width="11" height="1.5" fill="#fff"/><path d="M1,5.6 H12 M1,7.9 H12 M1,10.2 H12 M3.6,4 V12 M6.4,4 V12 M9.2,4 V12" stroke="#8399a4" stroke-width="0.7"/><path d="M7,6.6 L11.2,11 M11.2,6.6 L7,11" stroke="#fff" stroke-width="1.7"/></svg>
<div class="t" style="left:412px;top:789px;font-size:11px">Clear Data</div>
<svg class="abs" style="left:468px;top:795px" width="5" height="3" viewBox="0 0 5 3"><path d="M0,0 L5,0 L2.5,3 Z" fill="#1a1a1a"/></svg>
<svg class="abs" style="left:478px;top:789.5px" width="13" height="13" viewBox="0 0 13 13"><rect width="13" height="13" fill="#2f4f5d"/><rect x="1" y="2" width="11" height="1.5" fill="#fff"/><path d="M1,5.6 H12 M1,7.9 H12 M1,10.2 H12 M3.6,4 V12 M6.4,4 V12 M9.2,4 V12" stroke="#8399a4" stroke-width="0.7"/><path d="M0.8,7.6 H3.6 V5.6 L7,8.6 L3.6,11.6 V9.6 H0.8 Z" fill="#fff"/></svg>
<div class="t" style="left:494px;top:789px;font-size:11px;letter-spacing:0.3px">Import</div>
<svg class="abs" style="left:535.5px;top:789.5px" width="13" height="13" viewBox="0 0 13 13"><rect width="13" height="13" fill="#2f4f5d"/><rect x="1" y="2" width="11" height="1.5" fill="#fff"/><path d="M1,5.6 H12 M1,7.9 H12 M1,10.2 H12 M3.6,4 V12 M6.4,4 V12 M9.2,4 V12" stroke="#8399a4" stroke-width="0.7"/><path d="M6.2,7.6 H9 V5.6 L12.4,8.6 L9,11.6 V9.6 H6.2 Z" fill="#fff"/></svg>
<div class="t" style="left:552px;top:789px;font-size:11px">Export</div>
<svg class="abs" style="left:591px;top:789.5px" width="13" height="13" viewBox="0 0 13 13"><rect width="13" height="13" fill="#2f4f5d"/><circle cx="6.5" cy="6.5" r="3.3" stroke="#fff" stroke-width="2.6" fill="none" stroke-dasharray="1.7 0.9"/><circle cx="6.5" cy="6.5" r="2.6" stroke="#fff" stroke-width="1.6" fill="none"/></svg>
<div class="t" style="left:607px;top:789px;font-size:11px">Data Settings</div>
<svg class="abs" style="left:981px;top:790px" width="10" height="10" viewBox="0 0 10 10"><path d="M5,0.5 V6 M2.5,4 L5,6.8 L7.5,4" stroke="#1f3a78" stroke-width="1.3" fill="none"/><path d="M0,9 H10" stroke="#1f3a78" stroke-width="1.2"/></svg>
<div class="abs" style="left:292px;top:807px;width:705px;height:79px;background:#f0f0f0"></div>
<div class="abs" style="left:292px;top:807px;width:677px;height:22px;background:linear-gradient(#fbfbfb,#f1f1f1);border-top:1px solid #b9c4c8;border-bottom:1px solid #d5d5d5"></div>
<div class="abs" style="left:311px;top:808px;width:1px;height:39px;background:#dcdcdc"></div>
<div class="abs" style="left:382px;top:808px;width:1px;height:39px;background:#dcdcdc"></div>
<div class="abs" style="left:501px;top:808px;width:1px;height:39px;background:#dcdcdc"></div>
<div class="abs" style="left:968px;top:808px;width:1px;height:39px;background:#dcdcdc"></div>
<div class="abs" style="left:292px;top:829px;width:677px;height:18.5px;background:#fff;border-bottom:1px solid #dcdcdc"></div>
<div class="abs" style="left:311px;top:829px;width:1px;height:18px;background:#e4e4e4"></div>
<div class="abs" style="left:382px;top:829px;width:1px;height:18px;background:#e4e4e4"></div>
<div class="abs" style="left:501px;top:829px;width:1px;height:18px;background:#e4e4e4"></div>
<div class="t" style="left:311px;top:812.5px;width:71px;text-align:center">Data Set</div>
<div class="t" style="left:382px;top:812.5px;width:119px;text-align:center">Time</div>
<div class="t" style="left:501px;top:812.5px;width:467px;text-align:center">Notes</div>
<svg class="abs" style="left:293.5px;top:830.5px" width="10" height="10" viewBox="0 0 10 10"><rect x="0.5" y="0.5" width="9" height="9" fill="#f4f4f4" stroke="#9a9a9a"/><path d="M2.2,5 L4.2,7 L7.8,2.6" stroke="#9a9a9a" stroke-width="1.1" fill="none"/></svg>
<div class="t" style="left:313.5px;top:829px;">Measured 1</div>
<div class="t" style="left:384.5px;top:829px;letter-spacing:0.0px;font-size:10.5px">2020/10/14 23:39:29</div>
<div id="status" class="abs"></div>
<div class="t" style="left:289px;top:889px;font-size:11.2px;letter-spacing:0">Output:</div>
<div class="abs" style="left:332px;top:888.5px;width:157px;height:14px;background:#000;color:#19e619;font-size:10.8px;letter-spacing:0.05px;-webkit-text-stroke:0.25px #19e619;line-height:14px;white-space:nowrap;text-align:center;overflow:hidden">Analog Balanced 2 Ch, 40 ohm</div>
<div class="t" style="left:495px;top:889px;font-size:11.2px;letter-spacing:0">Input 1:</div>
<div class="abs" style="left:538px;top:888.5px;width:168px;height:14px;background:#000;color:#19e619;font-size:10.8px;letter-spacing:0.05px;-webkit-text-stroke:0.25px #19e619;line-height:14px;white-space:nowrap;text-align:center;overflow:hidden">Analog Balanced 2 Ch, 200 kohm</div>
<div class="abs" style="left:709px;top:888.5px;width:69px;height:14px;background:#000;color:#19e619;font-size:10.8px;letter-spacing:0.05px;-webkit-text-stroke:0.25px #19e619;line-height:14px;white-space:nowrap;text-align:center;overflow:hidden">310.0 mVrms</div>
<div class="abs" style="left:782px;top:888.5px;width:118px;height:14px;background:#000;color:#19e619;font-size:10.8px;letter-spacing:0.05px;-webkit-text-stroke:0.25px #19e619;line-height:14px;white-space:nowrap;text-align:center;overflow:hidden">AC (&lt;10 Hz) - 22.4 kHz</div>
<div class="t" style="left:906px;top:889px;font-size:11.2px;letter-spacing:0">Input 2:</div>
<div class="abs" style="left:950px;top:888.5px;width:34px;height:14px;background:#000;color:#19e619;font-size:10.8px;letter-spacing:0.05px;-webkit-text-stroke:0.25px #19e619;line-height:14px;white-space:nowrap;text-align:center;overflow:hidden">None</div>
<!--RIGHT-END-->
</body>
</html>
